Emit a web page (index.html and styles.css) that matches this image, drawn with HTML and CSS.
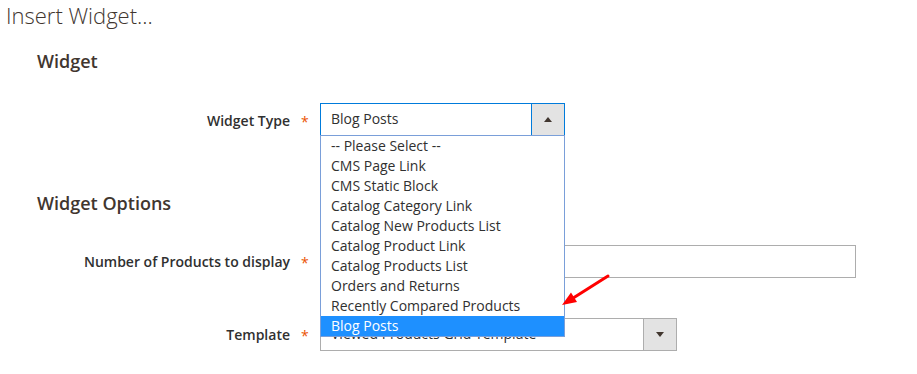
FILE: index.html
```html
<!DOCTYPE html>
<html lang="en">
<head>
<meta charset="utf-8">
<title>Insert Widget</title>
<link rel="stylesheet" href="styles.css">
</head>
<body>
<div class="page">
  <h1 class="title">Insert Widget...</h1>

  <h2 class="legend first">Widget</h2>
  <div class="field row-type">
    <label class="label">Widget Type</label>
    <span class="req">*</span>
    <div class="control">
      <div class="select focused w-type">
        <span class="value">Blog Posts</span>
        <span class="btn"><svg class="tri" width="8" height="5" viewBox="0 0 8 5"><polygon points="4,0 8,5 0,5"/></svg></span>
      </div>
      <ul class="listbox">
        <li>-- Please Select --</li>
        <li>CMS Page Link</li>
        <li>CMS Static Block</li>
        <li>Catalog Category Link</li>
        <li>Catalog New Products List</li>
        <li>Catalog Product Link</li>
        <li>Catalog Products List</li>
        <li>Orders and Returns</li>
        <li>Recently Compared Products</li>
        <li class="selected">Blog Posts</li>
      </ul>
    </div>
  </div>

  <h2 class="legend second">Widget Options</h2>
  <div class="field row-num">
    <label class="label">Number of Products to display</label>
    <span class="req">*</span>
    <div class="control">
      <input class="input" type="text" value="">
    </div>
  </div>

  <div class="field row-tpl">
    <label class="label">Template</label>
    <span class="req">*</span>
    <div class="control">
      <div class="select w-tpl">
        <span class="value">Viewed Products Grid Template</span>
        <span class="btn"><svg class="tri" width="8" height="5" viewBox="0 0 8 5"><polygon points="0,0 8,0 4,5"/></svg></span>
      </div>
    </div>
  </div>

  <svg class="annot" width="917" height="374" viewBox="0 0 917 374">
    <line x1="608" y1="276" x2="574" y2="297.5" stroke="#ff0000" stroke-width="3" stroke-linecap="round"/>
    <polygon points="562,305 577,302 571,292.5" fill="#ff0000"/>
  </svg>
</div>
</body>
</html>
```
FILE: styles.css
```css
* { box-sizing: border-box; }

html, body {
  margin: 0;
  padding: 0;
  background: #ffffff;
}

body {
  font-family: "Open Sans", "Noto Sans", sans-serif;
  color: #303030;
  font-size: 14px;
}

.page {
  position: relative;
  width: 917px;
  height: 374px;
  overflow: hidden;
}

.title {
  margin: 0;
  padding-left: 6px;
  font-size: 22px;
  font-weight: 300;
  line-height: 30px;
  color: #41362f;
}

.legend {
  margin: 0;
  padding-left: 37px;
  font-size: 18px;
  font-weight: 600;
  line-height: 24px;
  color: #41362f;
}

.legend.first { margin-top: 19px; }
.legend.second { margin-top: 55px; }

.field {
  display: flex;
  align-items: flex-start;
}

.row-type { margin-top: 30px; }
.row-num { margin-top: 30px; }
.row-tpl { margin-top: 40px; }

.label {
  width: 290px;
  flex: none;
  text-align: right;
  font-weight: 600;
  font-size: 14px;
  line-height: 19px;
  padding-top: 7px;
  color: #303030;
}

.row-type .label { padding-top: 8px; }

.req {
  width: 30px;
  flex: none;
  padding-left: 11px;
  padding-top: 11px;
  font-size: 14px;
  line-height: 14px;
  color: #eb5202;
}

.row-type .req { padding-top: 12px; }

.control {
  position: relative;
}

.select {
  display: flex;
  height: 33px;
  border: 1px solid #adadad;
  background: #ffffff;
}

.select.focused { border-color: #007bdb; }

.w-type { width: 245px; }
.w-tpl { width: 357px; }

.select .value {
  flex: 1;
  padding-left: 10px;
  line-height: 30px;
  font-size: 14px;
  color: #303030;
  white-space: nowrap;
  overflow: hidden;
}

.select .btn {
  width: 33px;
  flex: none;
  display: flex;
  align-items: center;
  justify-content: center;
  background: #e3e3e3;
  border-left: 1px solid #adadad;
}

.select.focused .btn { border-left-color: #007bdb; }

.tri { display: block; fill: #41362f; }

.listbox {
  position: absolute;
  z-index: 10;
  left: 0;
  top: 32px;
  width: 245px;
  margin: 0;
  padding: 0;
  list-style: none;
  background: #ffffff;
  border: 1px solid #7a9fd9;
}

.listbox li {
  height: 20px;
  line-height: 20px;
  padding-left: 10px;
  font-size: 14px;
  color: #303030;
  white-space: nowrap;
}

.listbox li.selected {
  background: #1e90ff;
  color: #ffffff;
}

.input {
  display: block;
  width: 536px;
  height: 33px;
  margin: 0;
  border: 1px solid #adadad;
  background: #ffffff;
  font-family: inherit;
  font-size: 14px;
  padding: 0 10px;
}

.annot {
  position: absolute;
  left: 0;
  top: 0;
  pointer-events: none;
  z-index: 20;
}
```
